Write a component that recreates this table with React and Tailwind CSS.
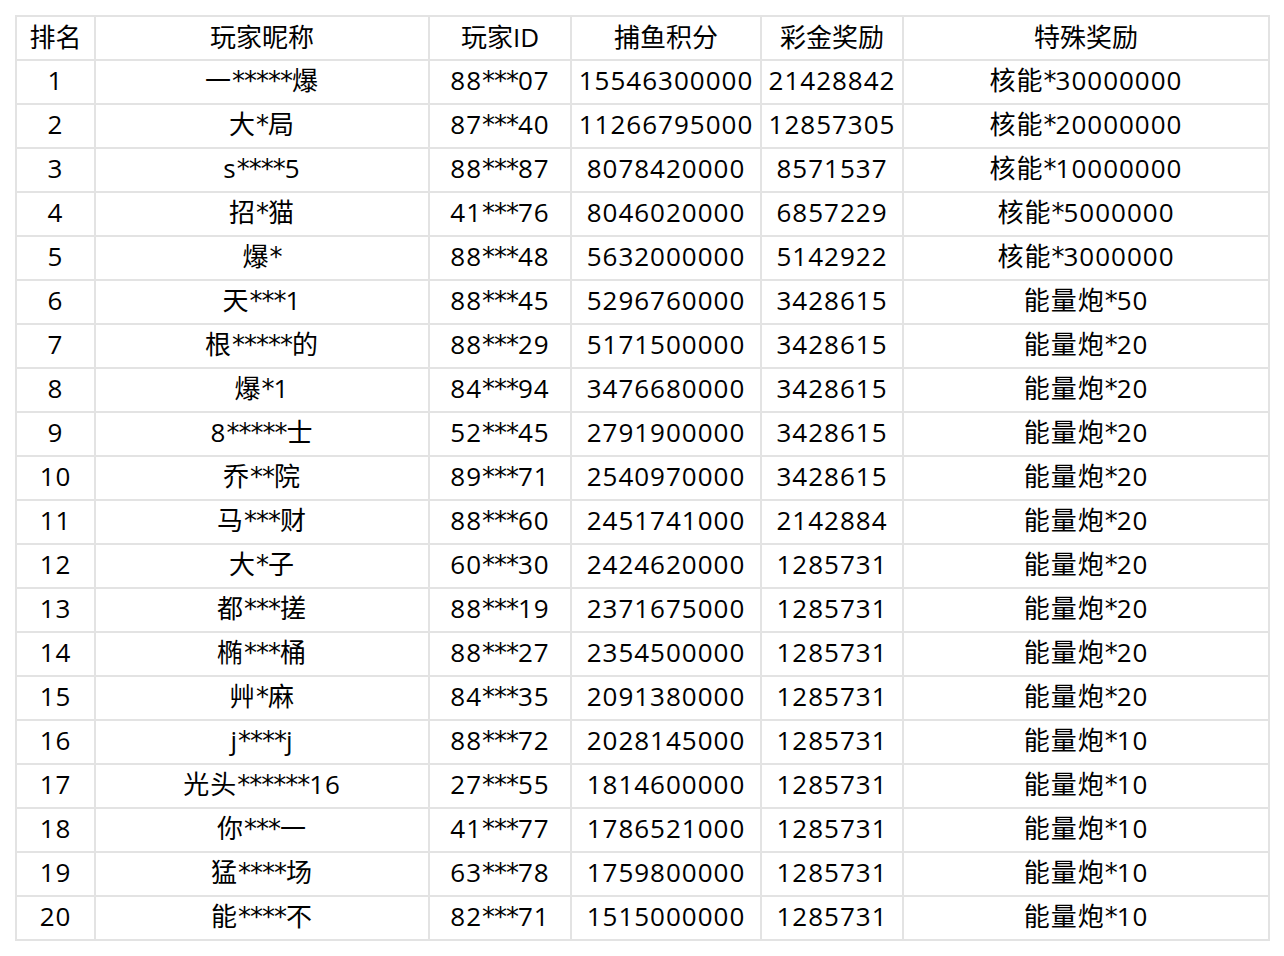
import React from "react";

const rows = [
  ["1", "一*****爆", "88***07", "15546300000", "21428842", "核能*30000000"],
  ["2", "大*局", "87***40", "11266795000", "12857305", "核能*20000000"],
  ["3", "s****5", "88***87", "8078420000", "8571537", "核能*10000000"],
  ["4", "招*猫", "41***76", "8046020000", "6857229", "核能*5000000"],
  ["5", "爆*", "88***48", "5632000000", "5142922", "核能*3000000"],
  ["6", "天***1", "88***45", "5296760000", "3428615", "能量炮*50"],
  ["7", "根*****的", "88***29", "5171500000", "3428615", "能量炮*20"],
  ["8", "爆*1", "84***94", "3476680000", "3428615", "能量炮*20"],
  ["9", "8*****士", "52***45", "2791900000", "3428615", "能量炮*20"],
  ["10", "乔**院", "89***71", "2540970000", "3428615", "能量炮*20"],
  ["11", "马***财", "88***60", "2451741000", "2142884", "能量炮*20"],
  ["12", "大*子", "60***30", "2424620000", "1285731", "能量炮*20"],
  ["13", "都***搓", "88***19", "2371675000", "1285731", "能量炮*20"],
  ["14", "椭***桶", "88***27", "2354500000", "1285731", "能量炮*20"],
  ["15", "艸*麻", "84***35", "2091380000", "1285731", "能量炮*20"],
  ["16", "j****j", "88***72", "2028145000", "1285731", "能量炮*10"],
  ["17", "光头******16", "27***55", "1814600000", "1285731", "能量炮*10"],
  ["18", "你***一", "41***77", "1786521000", "1285731", "能量炮*10"],
  ["19", "猛****场", "63***78", "1759800000", "1285731", "能量炮*10"],
  ["20", "能****不", "82***71", "1515000000", "1285731", "能量炮*10"],
];

const headers = ["排名", "玩家昵称", "玩家ID", "捕鱼积分", "彩金奖励", "特殊奖励"];
const widths = ["w-[79px]", "w-[334px]", "w-[142px]", "w-[190px]", "w-[142px]", "w-[366px]"];

function Txt({ s }) {
  const parts = s.match(/\*+|[^*]+/g) || [];
  return (
    <>
      {parts.map((p, i) =>
        p[0] === "*" ? (
          <span key={i} className="font-['DejaVu_Sans'] text-[26px] tracking-[-1px]">{p}</span>
        ) : (
          <span key={i} className="tracking-[1px]">{p}</span>
        )
      )}
    </>
  );
}

export default function App() {
  return (
    <div
      className="min-h-[956px] bg-white pl-[15px] pt-[15px]"
      style={{ fontFamily: '"Open Sans", "Noto Sans CJK SC", sans-serif' }}
    >
      <table className="table-fixed border-collapse border-2 border-[#e3e3e3] text-[26px] text-black w-[1253px]">
        <colgroup>
          {widths.map((w, i) => (
            <col key={i} className={w} />
          ))}
        </colgroup>
        <thead>
          <tr className="h-[44px]">
            {headers.map((h, i) => (
              <th key={i} className="border-2 border-[#e3e3e3] p-0 pb-[2px] text-center font-normal leading-none">
                <span className="tracking-[0px]">{h}</span>
              </th>
            ))}
          </tr>
        </thead>
        <tbody>
          {rows.map((r, ri) => (
            <tr key={ri} className="h-[44px]">
              {r.map((c, ci) => (
                <td key={ci} className="border-2 border-[#e3e3e3] p-0 pb-[4px] text-center leading-none whitespace-nowrap">
                  <Txt s={c} />
                </td>
              ))}
            </tr>
          ))}
        </tbody>
      </table>
    </div>
  );
}
